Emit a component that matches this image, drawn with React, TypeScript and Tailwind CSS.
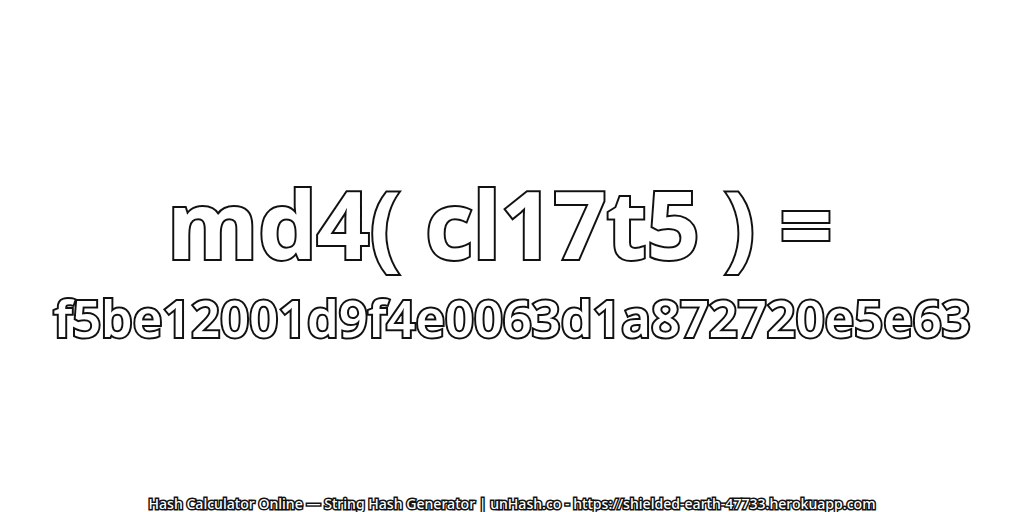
import React from 'react';

export default function App() {
  return (
    <div className="w-[1024px] h-[512px] overflow-hidden bg-white flex flex-col items-center font-['Noto_Sans',sans-serif]">
      <div className="flex-1 flex flex-col items-center justify-center pt-[33px]">
        <h1 className="pr-[24px] text-[92.7px] leading-[84px] font-bold whitespace-nowrap text-white [-webkit-text-stroke:4px_#111] [paint-order:stroke_fill]">
          md4( cl17t5 ) =
        </h1>
        <p className="mt-[23px] text-[50.6px] leading-[60px] font-semibold whitespace-nowrap text-white [-webkit-text-stroke:4px_#111] [paint-order:stroke_fill]">
          f5be12001d9f4e0063d1a872720e5e63
        </p>
      </div>
      <p className="h-[16px] text-[14.08px] leading-[16px] font-medium whitespace-nowrap text-white [-webkit-text-stroke:3px_#111] [paint-order:stroke_fill]">
        Hash Calculator Online — String Hash Generator | unHash.co - https://shielded-earth-47733.herokuapp.com
      </p>
    </div>
  );
}
